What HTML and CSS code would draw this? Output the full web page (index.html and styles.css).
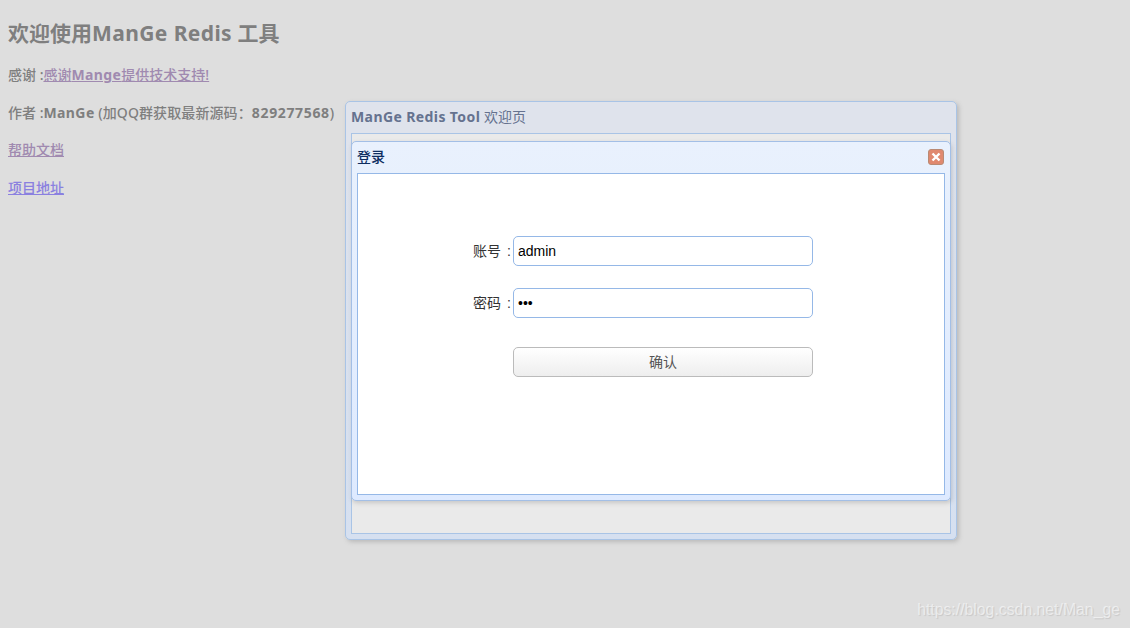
FILE: index.html
```html
<!DOCTYPE html>
<html lang="zh">
<head>
<meta charset="utf-8">
<title>ManGe Redis</title>
<link rel="stylesheet" href="styles.css">
</head>
<body>
<main class="intro">
  <h2 class="intro-title">欢迎使用<span class="latin">ManGe Redis</span> 工具</h2>
  <p class="intro-line">感谢 :<a class="link visited" href="#">感谢<span class="latin">Mange</span>提供技术支持!</a></p>
  <p class="intro-line">作者 :<span class="latin">ManGe</span> <span class="note">(加QQ群获取最新源码：</span><span class="digits">829277568</span>)</p>
  <p class="intro-line"><a class="link visited" href="#">帮助文档</a></p>
  <p class="intro-line"><a class="link fresh" href="#">项目地址</a></p>
</main>

<section class="panel">
  <header class="panel-title"><b class="latin">ManGe Redis Tool</b> 欢迎页</header>
  <div class="panel-body"></div>
</section>

<section class="dialog">
  <header class="dialog-header">
    <span class="dialog-title">登录</span>
    <span class="dialog-close">
      <svg width="10" height="10" viewBox="0 0 10 10"><path d="M1.5 1.5l7 7M8.5 1.5l-7 7" stroke="#fff" stroke-width="2.4" fill="none"/></svg>
    </span>
  </header>
  <form class="dialog-body">
    <label class="form-row">
      <span class="form-label">账号 :</span>
      <input class="form-input" type="text" value="admin">
    </label>
    <label class="form-row">
      <span class="form-label">密码 :</span>
      <input class="form-input" type="password" value="123">
    </label>
    <div class="form-row form-actions">
      <button class="form-button" type="button">确认</button>
    </div>
  </form>
</section>

<div class="watermark">https://blog.csdn.net/Man_ge</div>
</body>
</html>
```
FILE: styles.css
```css
html, body { margin: 0; height: 100%; overflow: hidden; }
body {
  background: #dedede;
  font-family: "Noto Sans", "Noto Sans CJK SC", sans-serif;
  color: #7f7f7f;
}
.intro { padding: 19px 8px 0; font-weight: 500; font-size: 14px; }
.intro-title { margin: 0 0 18px; font-size: 21px; line-height: 28px; font-weight: 700; }
.latin { letter-spacing: .4px; font-weight: 700; }
.digits { letter-spacing: .65px; font-weight: 700; }
.note { letter-spacing: .1px; }
.intro-line { margin: 0 0 18.7px; line-height: 19px; white-space: nowrap; }
.link { text-decoration: underline; text-decoration-thickness: 1px; }
.visited { color: #a08ab0; }
.fresh { color: #8a80e0; }

.panel {
  position: absolute; left: 345px; top: 101px;
  width: 600px; height: 432px;
  padding: 0 5px 5px;
  border: 1px solid #a9c4e6; border-radius: 5px;
  background: linear-gradient(to bottom, #dfe3ec 0, #dfe3ec 32px, #d6e0f0 100%);
  box-shadow: 2px 2px 4px rgba(120,120,120,.35);
  display: flex; flex-direction: column;
}
.panel-title { height: 31px; line-height: 30px; font-size: 14px; color: #65728f; white-space: nowrap; }
.panel-body { flex: 1; border: 1px solid #a9c4e6; background: #eaeaea; }

.dialog {
  position: absolute; left: 351px; top: 141px;
  width: 588px; height: 353px;
  padding: 0 5px 5px;
  border: 1px solid #a3bfe6; border-radius: 5px;
  background: linear-gradient(to bottom, #e9f1fd, #deeaff);
  box-shadow: 1px 2px 4px rgba(120,120,120,.3);
  display: flex; flex-direction: column;
}
.dialog-header { height: 31px; display: flex; align-items: center; justify-content: space-between; padding-right: 1px; }
.dialog-title { font-size: 14px; line-height: 28px; margin-top: -2px; font-weight: 500; color: #0e2d5f; }
.dialog-close {
  width: 16px; height: 16px; border-radius: 3px; margin-top: -1px;
  background: #e0896f; border: 1px solid #b98a74; box-sizing: border-box;
  display: flex; align-items: center; justify-content: center;
}
.dialog-body {
  flex: 1; background: #fff; border: 1px solid #95b8e7;
  padding: 62px 0 0;
  display: flex; flex-direction: column; align-items: stretch;
  font-family: "Liberation Sans", "Noto Sans CJK SC", sans-serif;
}
.form-row { display: flex; align-items: center; height: 30px; margin-bottom: 22px; padding-left: 115px; }
.form-label {
  width: 37px; margin-right: 3px; margin-top: -2px;
  text-align: right; font-size: 14px; color: #333; white-space: nowrap; word-spacing: 2px;
}
.form-input {
  width: 300px; height: 30px; box-sizing: border-box; margin: 0;
  border: 1px solid #95b8e7; border-radius: 5px;
  padding: 0 4px; font: 14px "Liberation Sans", sans-serif; color: #000; background: #fff; outline: none;
}
.form-actions { margin-top: 7px; padding-left: 155px; }
.form-button {
  width: 300px; height: 30px; margin: 0; padding: 0 0 3px; box-sizing: border-box;
  border: 1px solid #bbb; border-radius: 5px;
  background: linear-gradient(to bottom, #fff, #eee);
  font: 14px "Liberation Sans", "Noto Sans CJK SC", sans-serif; color: #555;
}
.watermark {
  position: absolute; right: 10px; bottom: 9px;
  font: 15.8px "Liberation Sans", sans-serif; color: rgba(255,255,255,.55);
  text-shadow: 1px 1px 1px rgba(0,0,0,.1);
}
```
